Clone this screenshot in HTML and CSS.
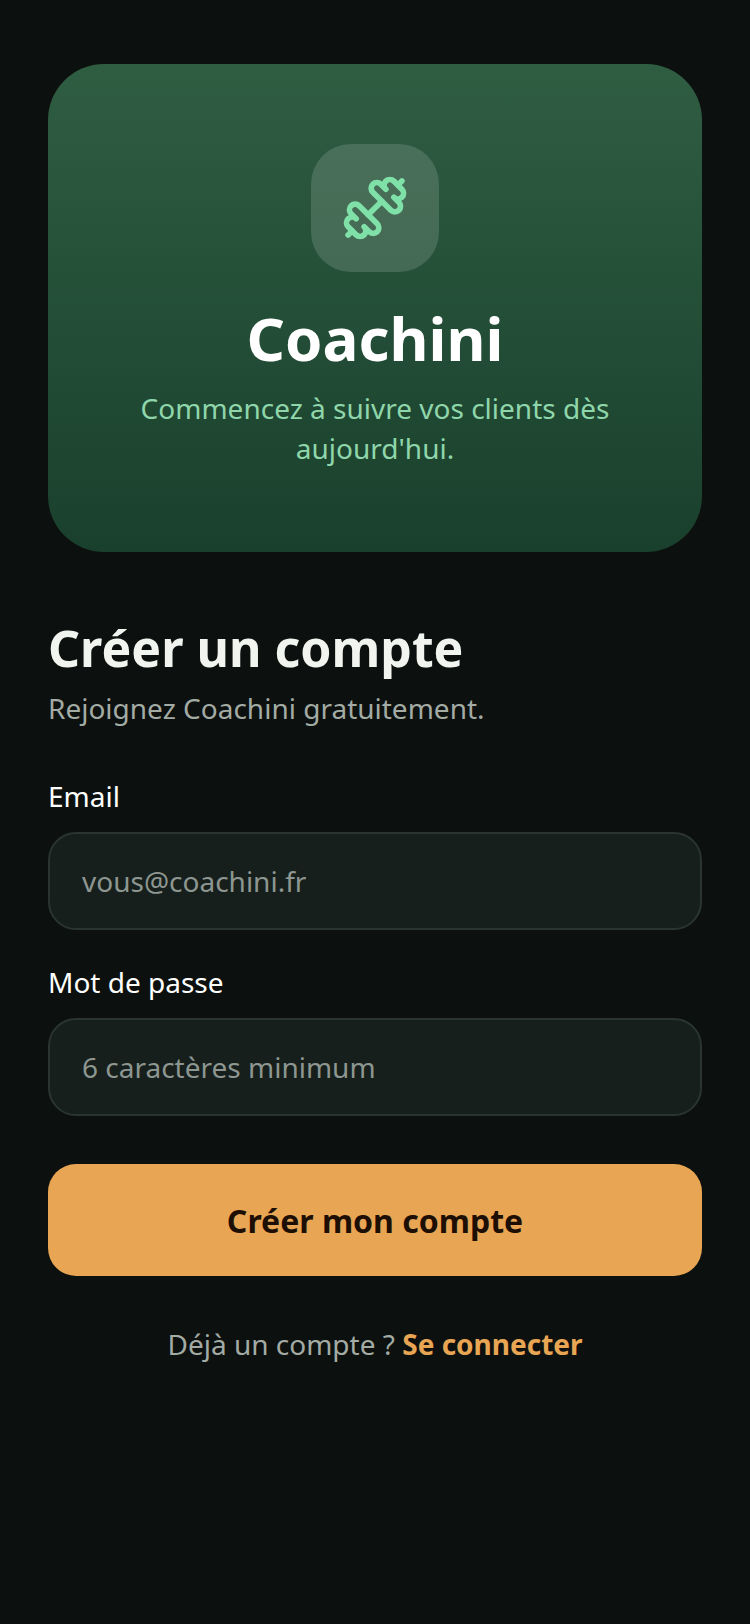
FILE: index.html
```html
<!DOCTYPE html>
<html lang="fr">

<head>
  <meta charset="UTF-8">
  <meta name="viewport" content="width=device-width, initial-scale=1.0">
  <title>Coachini</title>
  <link rel="stylesheet" href="styles.css">
</head>

<body>
  <main class="page">
    <section class="hero">
      <div class="hero-icon">
        <svg viewBox="0 0 24 24" width="68" height="68" fill="none" stroke="currentColor" stroke-width="2" stroke-linecap="round" stroke-linejoin="round">
          <path d="M17.596 12.768a2 2 0 1 0 2.829-2.829l-1.768-1.767a2 2 0 0 0 2.828-2.829l-2.828-2.828a2 2 0 0 0-2.829 2.828l-1.767-1.768a2 2 0 1 0-2.829 2.829z" />
          <path d="m2.5 21.5 1.4-1.4" />
          <path d="m20.1 3.9 1.4-1.4" />
          <path d="M5.343 21.485a2 2 0 1 0 2.829-2.828l1.767 1.768a2 2 0 1 0 2.829-2.829l-6.364-6.364a2 2 0 1 0-2.829 2.829l1.768 1.767a2 2 0 0 0-2.828 2.829z" />
          <path d="m9.6 14.4 4.8-4.8" />
        </svg>
      </div>
      <h1 class="brand">Coachini</h1>
      <p class="tagline">Commencez à suivre vos clients dès aujourd'hui.</p>
    </section>

    <h2 class="title">Créer un compte</h2>
    <p class="subtitle">Rejoignez Coachini gratuitement.</p>

    <form class="form">
      <label class="field">
        <span class="label">Email</span>
        <input class="input" type="email" placeholder="vous@coachini.fr">
      </label>
      <label class="field">
        <span class="label">Mot de passe</span>
        <input class="input" type="password" placeholder="6 caractères minimum">
      </label>
      <button class="submit" type="button">Créer mon compte</button>
    </form>

    <p class="switch">Déjà un compte ? <a class="switch-link" href="#">Se connecter</a></p>
  </main>
</body>

</html>
```

FILE: styles.css
```css
* {
  box-sizing: border-box;
}

body {
  margin: 0;
  min-height: 100vh;
  background-color: #0c100e;
  color: #fff;
  font-family: "Noto Sans", sans-serif;
}

.page {
  padding: 64px 48px;
}

.hero {
  display: flex;
  flex-direction: column;
  align-items: center;
  padding: 80px 48px;
  height: 488px;
  border-radius: 56px;
  background: linear-gradient(180deg, #2f5d42, #19402c);
  text-align: center;
}

.hero-icon {
  display: flex;
  align-items: center;
  justify-content: center;
  width: 128px;
  height: 128px;
  border-radius: 40px;
  background-color: rgba(255, 255, 255, 0.14);
  color: #7fe0a8;
}

.brand {
  margin: 28px 0 0;
  font-size: 60px;
  font-weight: 700;
  line-height: 76px;
}

.tagline {
  margin: 12px 0 0;
  font-size: 28px;
  line-height: 40px;
  color: #8fd6ab;
}

.title {
  margin: 64px 0 0;
  font-size: 50px;
  font-weight: 700;
  line-height: 64px;
  color: #f2f5ef;
}

.subtitle {
  margin: 8px 0 0;
  font-size: 28px;
  line-height: 40px;
  color: #a3aba5;
}

.form {
  display: flex;
  flex-direction: column;
  margin-top: 48px;
}

.field {
  display: block;
  margin-bottom: 32px;
}

.label {
  display: block;
  margin-bottom: 16px;
  font-size: 28px;
  line-height: 40px;
}

.input {
  display: block;
  width: 100%;
  height: 98px;
  padding: 0 32px;
  border: 2px solid #2a352f;
  border-radius: 28px;
  background-color: #161f1b;
  color: #fff;
  font-family: inherit;
  font-size: 28px;
  outline: none;
}

.input::placeholder {
  color: #8d9690;
  opacity: 1;
}

.submit {
  height: 112px;
  margin-top: 16px;
  border: none;
  border-radius: 28px;
  background-color: #e8a553;
  color: #1e0f04;
  font-family: inherit;
  font-size: 32px;
  font-weight: 700;
}

.switch {
  margin: 48px 0 0;
  font-size: 28px;
  line-height: 40px;
  text-align: center;
  color: #a3aba5;
}

.switch-link {
  color: #e8a553;
  font-weight: 700;
  text-decoration: none;
}
```
